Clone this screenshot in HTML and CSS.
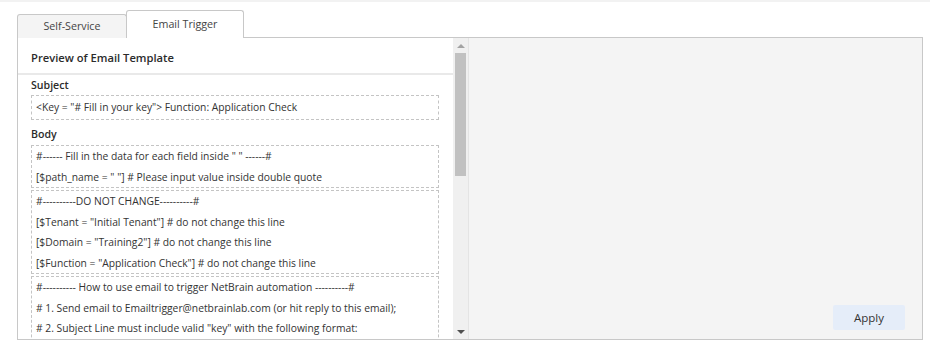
FILE: index.html
```html
<!DOCTYPE html>
<html>
<head>
<meta charset="utf-8">
<link rel="stylesheet" href="styles.css">
</head>
<body>
<div class="topstrip"></div>
<div class="tabs">
  <div class="tab">Self-Service</div>
  <div class="tab active">Email Trigger</div>
</div>
<div class="panel">
  <div class="left">
    <div class="content">
      <div class="header">Preview of Email Template</div>
      <div class="body">
        <div class="label">Subject</div>
        <div class="box">
          <div class="line">&lt;Key = "# Fill in your key"&gt; Function: Application Check</div>
        </div>
        <div class="label body-label">Body</div>
        <div class="boxes">
          <div class="box">
            <div class="line">#------ Fill in the data for each field inside " " ------#</div>
            <div class="line">[$path_name = " "] # Please input value inside double quote</div>
          </div>
          <div class="box">
            <div class="line">#----------DO NOT CHANGE----------#</div>
            <div class="line">[$Tenant = "Initial Tenant"] # do not change this line</div>
            <div class="line">[$Domain = "Training2"] # do not change this line</div>
            <div class="line">[$Function = "Application Check"] # do not change this line</div>
          </div>
          <div class="box box-cont">
            <div class="line">#---------- How to use email to trigger NetBrain automation ----------#</div>
            <div class="line"># 1. Send email to Emailtrigger@netbrainlab.com (or hit reply to this email);</div>
            <div class="line"># 2. Subject Line must include valid "key" with the following format:</div>
          </div>
        </div>
      </div>
    </div>
    <div class="scrollbar">
      <div class="arrow up"></div>
      <div class="track"><div class="thumb"></div></div>
      <div class="arrow down"></div>
    </div>
  </div>
  <div class="right">
    <button class="apply">Apply</button>
  </div>
</div>
</body>
</html>
```
FILE: styles.css
```css
html, body {
  margin: 0;
  padding: 0;
  background: #ffffff;
  font-family: "Open Sans", "Liberation Sans", sans-serif;
  color: #333333;
}
.topstrip {
  width: 930px;
  height: 2px;
  background: #f2f2f2;
}
.tabs {
  display: flex;
  align-items: flex-end;
  margin-left: 17px;
  margin-top: 8px;
  height: 28px;
  position: relative;
  z-index: 1;
}
.tab {
  box-sizing: border-box;
  width: 110px;
  height: 24px;
  border: 1px solid #c8c8c8;
  border-bottom: none;
  border-radius: 3px 3px 0 0;
  background: #f4f4f4;
  font-size: 10.7px;
  line-height: 23px;
  text-align: center;
  color: #444444;
}
.tab.active {
  width: 118px;
  height: 28px;
  margin-left: -1px;
  background: #ffffff;
  line-height: 26px;
}
.panel {
  box-sizing: border-box;
  margin-left: 17px;
  margin-top: -1px;
  width: 906px;
  height: 303px;
  border: 1px solid #c8c8c8;
  display: flex;
}
.left {
  display: flex;
  width: 451px;
  flex: none;
}
.content {
  width: 436px;
  overflow: hidden;
  background: #ffffff;
}
.header {
  box-sizing: border-box;
  height: 37px;
  padding: 4px 0 0 13px;
  line-height: 31px;
  font-size: 11.2px;
  font-weight: 600;
  color: #2b2b2b;
  border-bottom: 2px solid #e9e9e9;
}
.body {
  padding: 0 14px 0 13px;
}
.label {
  font-size: 10.6px;
  font-weight: 600;
  line-height: 20px;
  height: 20px;
  color: #2b2b2b;
}
.body-label {
  margin-top: 4px;
  margin-bottom: 1px;
}
.boxes {
  display: flex;
  flex-direction: column;
  gap: 2px;
}
.box {
  border: 1px dashed #c4c4c4;
  padding-left: 4px;
}
.box-cont {
  padding-bottom: 12px;
}
.body > .box .line {
  line-height: 23px;
}
.line {
  font-size: 10.3px;
  line-height: 20.5px;
  white-space: nowrap;
  color: #333333;
}
.scrollbar {
  width: 15px;
  flex: none;
  background: #f0f0f0;
  display: flex;
  flex-direction: column;
  border-right: 1px solid #e4e4e4;
}
.arrow {
  height: 15px;
  display: flex;
  align-items: center;
  justify-content: center;
}
.arrow.up::before {
  content: "";
  border-left: 4px solid transparent;
  border-right: 4px solid transparent;
  border-bottom: 4px solid #a3a3a3;
}
.arrow.down::before {
  content: "";
  border-left: 4px solid transparent;
  border-right: 4px solid transparent;
  border-top: 4px solid #505050;
}
.track {
  flex: 1;
  padding: 0 2px;
}
.thumb {
  height: 123px;
  background: #c1c1c1;
}
.right {
  flex: 1;
  background: #f4f4f4;
  display: flex;
  align-items: flex-end;
  justify-content: flex-end;
  padding: 0 17px 9px 0;
}
.apply {
  width: 72px;
  height: 25px;
  border: none;
  border-radius: 2px;
  background: #e5edf9;
  font-family: "Open Sans", "Liberation Sans", sans-serif;
  font-size: 11.5px;
  color: #333333;
  padding: 0;
}
```
